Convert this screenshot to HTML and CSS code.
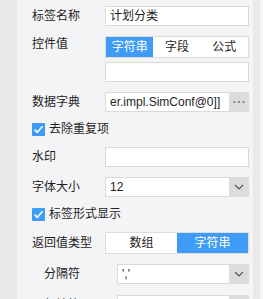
FILE: index.html
```html
<!DOCTYPE html>
<html lang="zh-CN">
<head>
    <meta charset="UTF-8">
    <meta name="viewport" content="width=device-width, initial-scale=1.0">
    <title>标签控件属性</title>
    <link rel="stylesheet" href="styles.css">
</head>
<body>
    <div class="layout">
        <div class="side"></div>

        <div class="panel">
            <div class="row r-name">
                <span class="label">标签名称</span>
                <div class="field">计划分类</div>
            </div>

            <div class="row r-value">
                <span class="label label-top">控件值</span>
                <div class="stack">
                    <div class="seg">
                        <span class="seg-item active">字符串</span>
                        <span class="seg-item">字段</span>
                        <span class="seg-item">公式</span>
                    </div>
                    <div class="field"></div>
                </div>
            </div>

            <div class="row r-dict">
                <span class="label">数据字典</span>
                <div class="combo">
                    <div class="combo-text">er.impl.SimConf@0]]</div>
                    <div class="combo-btn">
                        <svg width="12" height="4" viewBox="0 0 12 4">
                            <rect x="0.5" y="1" width="2" height="2" fill="#8a8a8a"/>
                            <rect x="5" y="1" width="2" height="2" fill="#8a8a8a"/>
                            <rect x="9.5" y="1" width="2" height="2" fill="#8a8a8a"/>
                        </svg>
                    </div>
                </div>
            </div>

            <div class="row check r-dedupe">
                <span class="box">
                    <svg width="13" height="13" viewBox="0 0 13 13">
                        <path d="M2.6 6.6 L5.3 9.3 L10.6 3.2" fill="none" stroke="#ffffff" stroke-width="1.6"/>
                    </svg>
                </span>
                <span class="check-text">去除重复项</span>
            </div>

            <div class="row r-mark">
                <span class="label">水印</span>
                <div class="field"></div>
            </div>

            <div class="row r-size">
                <span class="label">字体大小</span>
                <div class="combo">
                    <div class="combo-text">12</div>
                    <div class="combo-btn">
                        <svg width="10" height="6" viewBox="0 0 10 6">
                            <path d="M1 1 L5 5 L9 1" fill="none" stroke="#555555" stroke-width="1.2"/>
                        </svg>
                    </div>
                </div>
            </div>

            <div class="row check r-tag">
                <span class="box">
                    <svg width="13" height="13" viewBox="0 0 13 13">
                        <path d="M2.6 6.6 L5.3 9.3 L10.6 3.2" fill="none" stroke="#ffffff" stroke-width="1.6"/>
                    </svg>
                </span>
                <span class="check-text">标签形式显示</span>
            </div>

            <div class="row r-type">
                <span class="label">返回值类型</span>
                <div class="seg">
                    <span class="seg-item">数组</span>
                    <span class="seg-item active">字符串</span>
                </div>
            </div>

            <div class="row r-sep">
                <span class="label sub">分隔符</span>
                <div class="combo narrow">
                    <div class="combo-text">','</div>
                    <div class="combo-btn">
                        <svg width="10" height="6" viewBox="0 0 10 6">
                            <path d="M1 1 L5 5 L9 1" fill="none" stroke="#555555" stroke-width="1.2"/>
                        </svg>
                    </div>
                </div>
            </div>

            <div class="row r-start">
                <span class="label sub">起始符</span>
                <div class="combo narrow">
                    <div class="combo-text"></div>
                    <div class="combo-btn">
                        <svg width="10" height="6" viewBox="0 0 10 6">
                            <path d="M1 1 L5 5 L9 1" fill="none" stroke="#555555" stroke-width="1.2"/>
                        </svg>
                    </div>
                </div>
            </div>
        </div>

        <div class="scrollbar"></div>
    </div>
</body>
</html>
```

FILE: styles.css
```css
/* Reset */
* {
    margin: 0;
    padding: 0;
    box-sizing: border-box;
}

body {
    font-family: 'Liberation Sans', 'Noto Sans CJK SC', sans-serif;
    font-size: 12px;
    color: #1e1e1e;
    background-color: #f4f4f6;
}

.layout {
    display: flex;
    height: 100vh;
    overflow: hidden;
}

.side {
    width: 17px;
    flex: none;
    background-color: #e9e9ea;
}

.scrollbar {
    width: 7px;
    flex: none;
    background-color: #e9e9ea;
}

.panel {
    width: 236px;
    flex: none;
    padding: 0 4px 0 15px;
    display: flex;
    flex-direction: column;
}

/* Rows */
.row {
    display: flex;
    align-items: center;
}

.r-name   { margin-top: 6px; }
.r-value  { margin-top: 10px; align-items: flex-start; }
.r-dict   { margin-top: 10px; }
.r-dedupe { margin-top: 10px; }
.r-mark   { margin-top: 11px; }
.r-size   { margin-top: 10px; }
.r-tag    { margin-top: 10px; }
.r-type   { margin-top: 11px; }
.r-sep    { margin-top: 10px; }
.r-start  { margin-top: 11px; }

.label {
    width: 73px;
    flex: none;
    line-height: 20px;
    white-space: nowrap;
}

.label-top {
    line-height: 16px;
    margin-top: 0;
}

.label.sub {
    width: 85px;
    padding-left: 12px;
}

.stack {
    display: flex;
    flex-direction: column;
    gap: 4px;
}

/* Inputs */
.field {
    width: 144px;
    height: 20px;
    line-height: 18px;
    padding: 0 4px;
    background-color: #ffffff;
    border: 1px solid #d9d9d9;
    white-space: nowrap;
    overflow: hidden;
}

.combo {
    width: 144px;
    height: 20px;
    display: flex;
}

.combo.narrow {
    width: 132px;
}

.combo-text {
    flex: 1;
    min-width: 0;
    line-height: 18px;
    padding: 0 4px;
    background-color: #ffffff;
    border: 1px solid #d9d9d9;
    border-right: none;
    white-space: nowrap;
    overflow: hidden;
}

.combo-btn {
    width: 20px;
    flex: none;
    display: flex;
    align-items: center;
    justify-content: center;
    background-color: #dcdcdf;
}

/* Segmented buttons */
.seg {
    width: 144px;
    height: 22px;
    display: flex;
    border: 1px solid #dcdcdc;
    background-color: #ffffff;
}

.seg-item {
    flex: 1;
    text-align: center;
    line-height: 20px;
}

.seg-item.active {
    background-color: #3f9cf6;
    color: #ffffff;
}

/* Checkboxes */
.check {
    height: 14px;
}

.box {
    width: 13px;
    height: 13px;
    flex: none;
    display: flex;
    background-color: #3f9cf6;
    border-radius: 1px;
}

.check-text {
    margin-left: 4px;
    line-height: 14px;
}
```
